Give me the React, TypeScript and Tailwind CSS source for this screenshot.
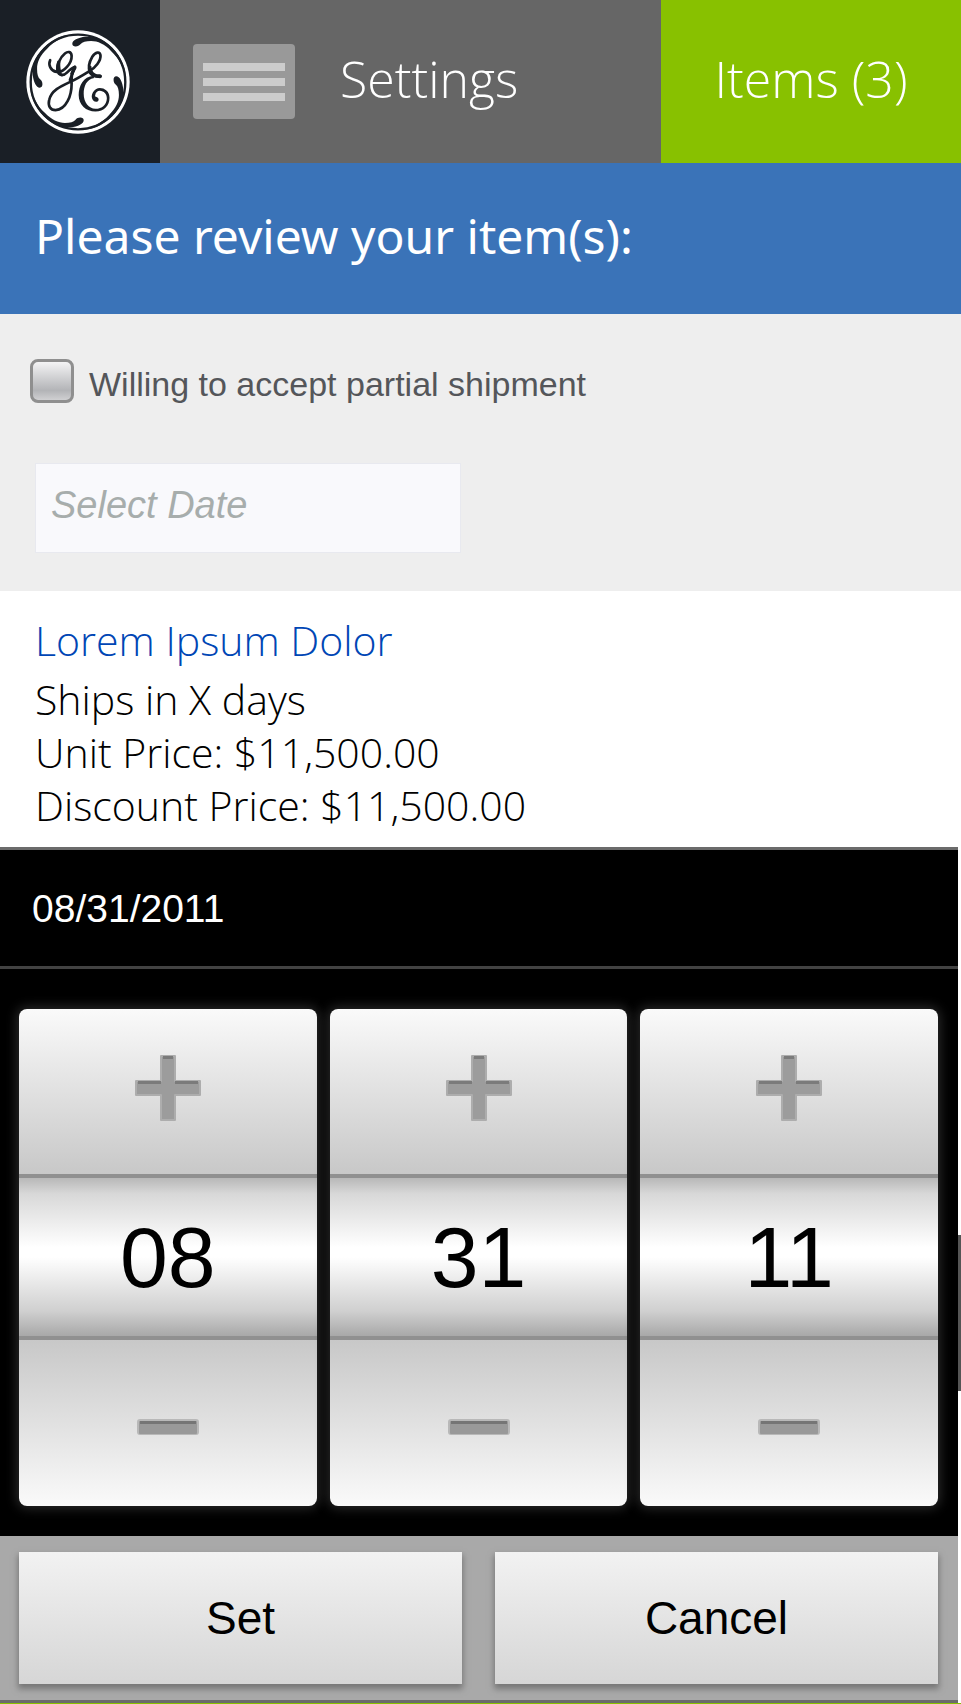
import { useState } from "react";

const INK = "#1a1f26";

const SWIRL =
  "M118 262C108 262 99 246 97 222C96 204 99 192 105 186C101 184 100 190 98 196C103 172 118 142 142 124C165 109 190 102 218 103C188 109 160 124 140 146C119 166 110 186 110 206C110 222 113 232 119 237C124 241 126 246 126 252C126 258 123 262 118 262Z";

function Logo() {
  return (
    <svg width="104" height="104" viewBox="77 90 310 310" fill="none" aria-hidden="true">
      <defs>
        <clipPath id="logo-disc">
          <circle cx="232" cy="245" r="144" />
        </clipPath>
      </defs>
      <circle cx="232" cy="245" r="154" fill="#fff" />
      <circle cx="232" cy="245" r="141" stroke={INK} strokeWidth="7" />
      <g fill={INK} clipPath="url(#logo-disc)">
        <path d={SWIRL} />
        <path d={SWIRL} transform="rotate(90 232 245)" />
        <path d={SWIRL} transform="rotate(180 232 245)" />
        <path d={SWIRL} transform="rotate(270 232 245)" />
      </g>
      <g stroke={INK} strokeWidth="8" strokeLinecap="round" strokeLinejoin="round">
        <path d="M149 180C143 193 150 212 168 215C190 218 214 188 213 167C212 154 202 153 193 160C178 172 168 196 171 211C174 226 188 228 199 217C209 207 216 202 222 200C219 212 212 228 208 239" />
        <path d="M222 202C213 216 212 230 213 250C213 286 197 327 165 329C149 329 142 316 146 299C152 270 182 257 208 245C232 234 249 223 265 213C284 203 301 181 299 165C297 153 284 155 275 169C266 184 261 203 268 218C274 229 286 229 299 228" />
      </g>
      <g fill={INK}>
        <path d="M171 182C163 202 166 225 186 229C183 216 177 202 180 184Z" />
        <path d="M218 198C224 193 230 198 227 205L217 224L208 222Z" />
        <path d="M263 193C259 214 267 233 298 234C305 232 305 223 297 222C282 224 273 214 272 198Z" />
        <path d="M278 226C248 228 234 256 234 284C234 314 256 333 284 333C310 333 326 315 326 292C326 273 311 263 297 263C281 264 273 278 273 290C274 300 281 305 288 304C295 302 295 294 290 291C286 289 283 290 283 286C284 276 290 271 297 271C309 272 318 280 318 294C317 312 304 325 284 325C264 324 249 306 249 280C249 258 257 237 280 233Z" />
      </g>
    </svg>
  );
}

function Plus() {
  return (
    <svg width="68" height="68" viewBox="0 0 68 68" aria-hidden="true">
      <path
        d="M27 2h14v25h25v14H41v25H27V41H2V27h25z"
        fill="#9c9c9c"
        stroke="#adadad"
        strokeWidth="2"
        strokeLinejoin="round"
      />
      <path d="M4 28.5h23M41 28.5h23M29 3.5h10" stroke="#7b7b7b" strokeWidth="3" />
    </svg>
  );
}

function Minus() {
  return (
    <svg width="62" height="16" viewBox="0 0 62 16" aria-hidden="true">
      <rect width="62" height="16" rx="3" fill="#b8b8b8" />
      <rect x="2" y="2" width="58" height="13" rx="1" fill="#999" />
      <rect x="3" y="2" width="56" height="3" fill="#757575" />
    </svg>
  );
}

type SpinnerProps = { label: string; value: number; onChange: (value: number) => void };

function Spinner({ label, value, onChange }: SpinnerProps) {
  const text = String(value).padStart(2, "0");
  return (
    <div
      role="group"
      aria-label={label}
      className="flex min-w-0 flex-1 flex-col overflow-hidden rounded-lg shadow-[0_0_12px_2px_#2c2c2c]"
    >
      <button
        type="button"
        aria-label={`Increase ${label}`}
        onClick={() => onChange(value + 1)}
        className="flex h-[165px] items-center justify-center bg-linear-to-b from-[#fafafa] to-[#c8c8c8] pb-2"
      >
        <Plus />
      </button>
      <input
        aria-label={label}
        value={text}
        onChange={(e) => onChange(Number(e.target.value) || 0)}
        className="h-[166px] w-full border-y-4 border-[#909090] bg-[linear-gradient(to_bottom,#b8b8b8_0%,#d8d8d8_10%,#ffffff_44%,#ffffff_50%,#d0d0d0_84%,#a8a8a8_100%)] text-center text-[86px] leading-none text-black"
      />
      <button
        type="button"
        aria-label={`Decrease ${label}`}
        onClick={() => onChange(value - 1)}
        className="flex h-[166px] items-center justify-center bg-linear-to-b from-[#c8c8c8] to-[#fafafa] pt-2"
      >
        <Minus />
      </button>
    </div>
  );
}

export default function App() {
  const [month, setMonth] = useState(8);
  const [day, setDay] = useState(31);
  const [year, setYear] = useState(11);
  const pad = (n: number) => String(n).padStart(2, "0");

  return (
    <main className="w-full bg-white font-['Liberation_Sans',sans-serif]">
      <header className="flex h-[163px] bg-[#666666] font-['Open_Sans',sans-serif] text-white">
        <a href="#home" aria-label="Home" className="flex w-40 shrink-0 items-center justify-center bg-[#1a1f26] pr-1">
          <Logo />
        </a>
        <div className="flex flex-1 items-center pl-[33px]">
          <button
            type="button"
            aria-label="Menu"
            className="flex h-[75px] w-[102px] flex-col justify-center gap-[7px] rounded bg-[#999999] px-[10px]"
          >
            <span className="h-2 bg-[#cccccc]" />
            <span className="h-2 bg-[#cccccc]" />
            <span className="h-2 bg-[#cccccc]" />
          </button>
          <h1 className="ml-[45px] pb-1.5 text-[50px] leading-none font-light">Settings</h1>
        </div>
        <a
          href="#items"
          className="flex w-[300px] shrink-0 items-center justify-center bg-[#88c100] pb-1.5 text-[50px] leading-none font-light"
        >
          Items (3)
        </a>
      </header>

      <h2 className="flex h-[151px] items-center bg-[#3a73b8] px-[35px] pb-1.5 font-['Noto_Sans',sans-serif] text-[48px] leading-none text-white">
        Please review your item(s):
      </h2>

      <section className="bg-[#eeeeee] pt-[45px] pb-[38px]">
        <div className="flex items-start gap-[15px] pl-[30px] text-[34px] leading-[50px] text-[#54565a]">
          <input
            id="partial"
            type="checkbox"
            className="size-11 appearance-none rounded-lg border-3 border-[#8f8f8f] bg-linear-to-b from-[#f4f4f5] via-[#b3b4b7] via-75% to-[#d0d0d2]"
          />
          <label htmlFor="partial">Willing to accept partial shipment</label>
        </div>
        <input
          aria-label="Select Date"
          placeholder="Select Date"
          className="mt-[54px] ml-[35px] block h-[90px] w-[426px] border border-[#e8e9ef] bg-[#f9f9fc] px-[15px] pb-1.5 text-[38px] placeholder:text-[#a7adac] placeholder:italic"
        />
      </section>

      <section className="px-[35px] pt-[23px] pb-[15px] font-['Open_Sans',sans-serif] text-[41px] leading-[53px] font-light text-black">
        <h3 className="mb-[6px]">
          <a href="#product" className="text-[#0046b5]">
            Lorem Ipsum Dolor
          </a>
        </h3>
        <p>Ships in X days</p>
        <p>Unit Price: $11,500.00</p>
        <p>Discount Price: $11,500.00</p>
      </section>

      <form className="relative mr-[3px]" onSubmit={(e) => e.preventDefault()}>
        <div className="border-t-3 border-[#6b6b6b] bg-black">
          <p className="flex h-[119px] items-center border-b-3 border-[#424242] px-8 text-[39px] leading-none text-white">
            {pad(month)}/{pad(day)}/20{pad(year)}
          </p>
          <div className="flex gap-[13px] pt-10 pr-5 pb-[30px] pl-[19px]">
            <Spinner label="month" value={month} onChange={setMonth} />
            <Spinner label="day" value={day} onChange={setDay} />
            <Spinner label="year" value={year} onChange={setYear} />
          </div>
        </div>
        <div className="flex gap-[33px] border-b-3 border-[#6b6b6b] bg-[#a9a9a9] pt-4 pr-5 pb-[16px] pl-[19px] text-[46px] leading-none text-black">
          <button
            type="submit"
            className="h-[132px] flex-1 bg-linear-to-b from-[#f2f2f2] to-[#d6d6d6] shadow-[0_4px_6px_1px_#777777]"
          >
            Set
          </button>
          <button
            type="button"
            className="h-[132px] flex-1 bg-linear-to-b from-[#f2f2f2] to-[#d6d6d6] shadow-[0_4px_6px_1px_#777777]"
          >
            Cancel
          </button>
        </div>
        <div className="absolute top-[388px] -right-[3px] h-[156px] w-[3px] bg-[#555555]" />
      </form>
      <div className="h-px bg-[#88c100]" />
    </main>
  );
}
